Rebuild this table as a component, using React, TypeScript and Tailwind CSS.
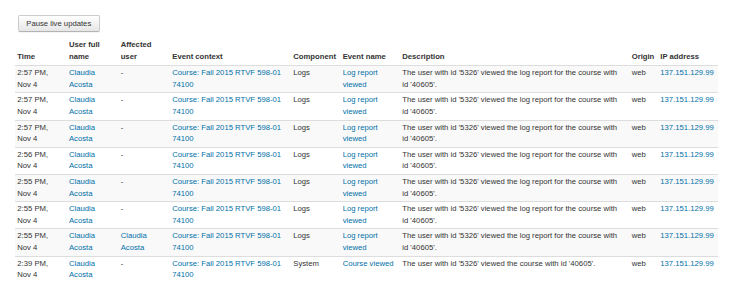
const rows = [
  { time: "2:57 PM,", date: "Nov 4", affected: false, component: "Logs", event: "Log report viewed", desc: "The user with id '5326' viewed the log report for the course with id '40605'." },
  { time: "2:57 PM,", date: "Nov 4", affected: false, component: "Logs", event: "Log report viewed", desc: "The user with id '5326' viewed the log report for the course with id '40605'." },
  { time: "2:57 PM,", date: "Nov 4", affected: false, component: "Logs", event: "Log report viewed", desc: "The user with id '5326' viewed the log report for the course with id '40605'." },
  { time: "2:56 PM,", date: "Nov 4", affected: false, component: "Logs", event: "Log report viewed", desc: "The user with id '5326' viewed the log report for the course with id '40605'." },
  { time: "2:55 PM,", date: "Nov 4", affected: false, component: "Logs", event: "Log report viewed", desc: "The user with id '5326' viewed the log report for the course with id '40605'." },
  { time: "2:55 PM,", date: "Nov 4", affected: false, component: "Logs", event: "Log report viewed", desc: "The user with id '5326' viewed the log report for the course with id '40605'." },
  { time: "2:55 PM,", date: "Nov 4", affected: true, component: "Logs", event: "Log report viewed", desc: "The user with id '5326' viewed the log report for the course with id '40605'." },
  { time: "2:39 PM,", date: "Nov 4", affected: false, component: "System", event: "Course viewed", desc: "The user with id '5326' viewed the course with id '40605'." },
];

const th = "pl-[2.3px] pr-[2px] pt-[2px] pb-[3px] text-left align-bottom font-bold";
const td = "pl-[2.3px] pr-[2px] pt-[1px] pb-[2px] align-top border-t border-[#dddddd]";
const link = "text-[#0070a8]";

export default function App() {
  return (
    <div
      className="w-[731px] h-[297px] bg-white text-[#333333] text-[7.7px] leading-[11.6px] overflow-hidden"
      style={{ fontFamily: '"Liberation Sans", Arial, sans-serif' }}
    >
      <div className="pt-[15px] pl-[18px]">
        <button className="h-[17px] w-[81.5px] rounded-[2px] border border-[#cccccc] border-b-[#b3b3b3] bg-gradient-to-b from-white to-[#e6e6e6] text-[#333333] shadow-[inset_0_1px_0_rgba(255,255,255,0.2),0_1px_1px_rgba(0,0,0,0.05)]">
          Pause live updates
        </button>
      </div>

      {/* log table */}
      <table className="ml-[15px] mt-[5px] w-[703px] table-fixed border-collapse">
        <colgroup>
          <col className="w-[51.7px]" />
          <col className="w-[51.7px]" />
          <col className="w-[51.6px]" />
          <col className="w-[121px]" />
          <col className="w-[49.4px]" />
          <col className="w-[59.6px]" />
          <col className="w-[229.4px]" />
          <col className="w-[28.6px]" />
          <col className="w-[60px]" />
        </colgroup>
        <thead>
          <tr>
            <th className={th}>Time</th>
            <th className={th}>User full name</th>
            <th className={th}>Affected user</th>
            <th className={th}>Event context</th>
            <th className={th + " whitespace-nowrap"}>Component</th>
            <th className={th}>Event name</th>
            <th className={th}>Description</th>
            <th className={th}>Origin</th>
            <th className={th + " whitespace-nowrap"}>IP address</th>
          </tr>
        </thead>
        <tbody>
          {rows.map((r, i) => (
            <tr key={i} className={i % 2 === 0 ? "bg-[#f9f9f9]" : "bg-white"}>
              <td className={td}>
                {r.time}
                <br />
                {r.date}
              </td>
              <td className={td}>
                <span className={link}>Claudia Acosta</span>
              </td>
              <td className={td}>
                {r.affected ? <span className={link}>Claudia Acosta</span> : "-"}
              </td>
              <td className={td}>
                <span className={link}>Course: Fall 2015 RTVF 598-01 74100</span>
              </td>
              <td className={td}>{r.component}</td>
              <td className={td}>
                <span className={link}>{r.event}</span>
              </td>
              <td className={td + " pr-[10px]"}>{r.desc}</td>
              <td className={td}>web</td>
              <td className={td + " whitespace-nowrap"}>
                <span className={link}>137.151.129.99</span>
              </td>
            </tr>
          ))}
        </tbody>
      </table>
    </div>
  );
}
